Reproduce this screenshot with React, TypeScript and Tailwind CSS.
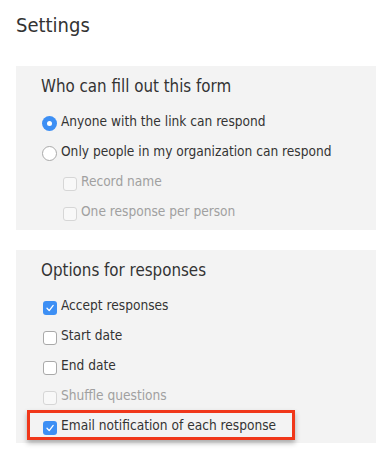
type Opt = { label: string; checked?: boolean; disabled?: boolean; indent?: boolean; highlight?: boolean };

function Radio({ on }: { on: boolean }) {
  return on ? (
    <span className="mt-[5px] flex h-[15px] w-[15px] shrink-0 items-center justify-center rounded-full bg-[#3d8ff4]">
      <span className="h-[5px] w-[5px] rounded-full bg-white" />
    </span>
  ) : (
    <span className="mt-[5px] h-[15px] w-[15px] shrink-0 rounded-full border border-[#a9a9a9] bg-white" />
  );
}

function Check({ on, disabled }: { on?: boolean; disabled?: boolean }) {
  if (on)
    return (
      <span className="mt-[6px] flex h-[14px] w-[14px] shrink-0 items-center justify-center rounded-[3px] bg-[#3d8ff4]">
        <svg width="10" height="10" viewBox="0 0 10 10" fill="none">
          <path d="M2 5.2 L4.2 7.6 L8.2 2.4" stroke="white" strokeWidth="1.3" strokeLinecap="round" strokeLinejoin="round" />
        </svg>
      </span>
    );
  return (
    <span
      className={
        disabled
          ? "mt-[6px] h-[14px] w-[14px] shrink-0 rounded-[3px] border border-[#d6d6d6] bg-[#f8f8f8]"
          : "mt-[6px] h-[14px] w-[14px] shrink-0 rounded-[3px] border border-[#a9a9a9] bg-white"
      }
    />
  );
}

function Panel({ title, children, bottom }: { title: string; children: React.ReactNode; bottom: string }) {
  return (
    <div className={"ml-4 w-[360px] bg-[#f3f3f3] pl-[25px] pt-[9px] " + bottom}>
      <h2 className="mb-[9px] text-[16.8px] leading-[22px] text-[#333]">{title}</h2>
      {children}
    </div>
  );
}

export default function App() {
  const who = [
    { label: "Anyone with the link can respond", on: true },
    { label: "Only people in my organization can respond", on: false },
  ];
  const sub: Opt[] = [
    { label: "Record name", disabled: true },
    { label: "One response per person", disabled: true },
  ];
  const opts: Opt[] = [
    { label: "Accept responses", checked: true },
    { label: "Start date" },
    { label: "End date" },
    { label: "Shuffle questions", disabled: true },
    { label: "Email notification of each response", checked: true, highlight: true },
  ];

  return (
    <div className="min-h-[461px] bg-white font-['DejaVu_Sans_Condensed','DejaVu_Sans',sans-serif] text-[#333]">
      <h1 className="pt-3 pl-4 text-[20px] leading-[26px] text-[#333]">Settings</h1>

      <div className="mt-[28px]">
        <Panel title="Who can fill out this form" bottom="pb-[4px]">
          {who.map((r) => (
            <div key={r.label} className="flex h-[30px] items-center gap-[4px] pl-[1px] text-[13.6px]">
              <Radio on={r.on} />
              <span>{r.label}</span>
            </div>
          ))}
          {sub.map((o) => (
            <div key={o.label} className="flex h-[30px] items-center gap-[4px] pl-[22px] text-[13.6px] text-[#a0a0a0]">
              <Check disabled />
              <span>{o.label}</span>
            </div>
          ))}
        </Panel>
      </div>

      <div className="mt-5">
        <Panel title="Options for responses" bottom="pb-[3px]">
          {opts.map((o) =>
            o.highlight ? (
              <div
                key={o.label}
                className="-ml-[14px] flex h-[30px] w-[268px] items-center gap-[4px] border-[3px] border-[#f0371a] pl-[13px] text-[13.6px] shadow-[0_3px_5px_rgba(0,0,0,0.3)]"
              >
                <span className="-mt-[1px] flex">
                  <Check on />
                </span>
                <span>{o.label}</span>
              </div>
            ) : (
              <div
                key={o.label}
                className={
                  "flex h-[30px] items-center gap-[4px] pl-[2px] text-[13.6px] " + (o.disabled ? "text-[#a0a0a0]" : "")
                }
              >
                <Check on={o.checked} disabled={o.disabled} />
                <span>{o.label}</span>
              </div>
            )
          )}
        </Panel>
      </div>
    </div>
  );
}
